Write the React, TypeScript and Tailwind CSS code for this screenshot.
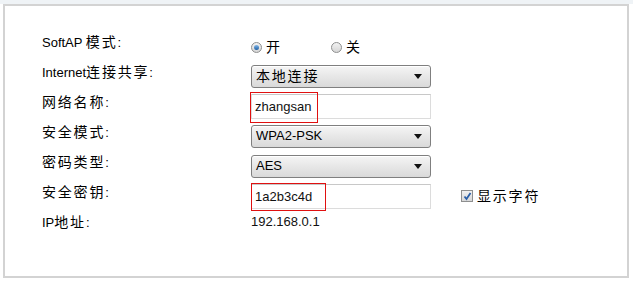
const latin = "font-['Liberation_Sans','Noto_Sans_CJK_SC',sans-serif]"

function Zh({ children }: { children: string }) {
  return <span className="text-[14px] tracking-[1.8px]">{children}</span>
}

function Label({ children, shift = "pb-[7px]" }: { children: React.ReactNode; shift?: string }) {
  return <div className={`w-[209px] shrink-0 text-[13px] text-black ${shift}`}>{children}</div>
}

function Radio({ checked }: { checked?: boolean }) {
  return (
    <span className="flex h-[11px] w-[11px] items-center justify-center rounded-full border border-[#8e8f8f] bg-gradient-to-b from-[#f2f2f2] to-[#d6d6d6]">
      {checked && (
        <span className="h-[5px] w-[5px] rounded-full bg-gradient-to-b from-[#7fb6e8] to-[#1d5fa3]" />
      )}
    </span>
  )
}

function Select({ value }: { value: React.ReactNode }) {
  return (
    <div className="flex h-[23px] w-[180px] items-center justify-between rounded-[3px] border border-[#7f7f7f] bg-gradient-to-b from-[#f5f5f5] to-[#d9d9d9] pl-[4px] pr-[8px] text-[13px] text-black shadow-[inset_0_1px_0_#ffffff]">
      <span>{value}</span>
      <svg width="8" height="5" viewBox="0 0 8 5">
        <path d="M0 0h8L4 5z" fill="#111" />
      </svg>
    </div>
  )
}

function TextInput({ value, box }: { value: string; box: string }) {
  return (
    <div className="relative h-[25px] w-[180px] border border-[#dcdcdc] border-t-[#c8c8c8] bg-white pl-[3px] text-[13px] leading-[23px] text-[#111]">
      {value}
      <div className={`absolute border border-[#e01010] ${box}`} />
    </div>
  )
}

export default function App() {
  return (
    <div className={`h-[283px] w-[633px] bg-white ${latin}`}>
      <div className="h-[4px] bg-[#eff3f6]" />
      <div className="ml-[3px] flex h-[274px] w-[626px] flex-col border-2 border-[#d3d3d3] pl-[37px] pt-[27px]">
        <div className="flex h-[28px] items-center">
          <Label shift="pb-[9px]">
            SoftAP <Zh>模式</Zh>:
          </Label>
          <div className="flex items-center">
            <div className="flex w-[80px] items-center gap-[4px]">
              <Radio checked />
              <Zh>开</Zh>
            </div>
            <div className="flex items-center gap-[4px]">
              <Radio />
              <Zh>关</Zh>
            </div>
          </div>
        </div>

        <div className="flex h-[30px] items-center">
          <Label>
            Internet<Zh>连接共享</Zh>:
          </Label>
          <Select value={<Zh>本地连接</Zh>} />
        </div>

        <div className="flex h-[30px] items-center">
          <Label>
            <Zh>网络名称</Zh>:
          </Label>
          <TextInput value="zhangsan" box="-left-[2px] -top-[3px] h-[31px] w-[68px]" />
        </div>

        <div className="flex h-[30px] items-center">
          <Label>
            <Zh>安全模式</Zh>:
          </Label>
          <Select value="WPA2-PSK" />
        </div>

        <div className="flex h-[30px] items-center">
          <Label>
            <Zh>密码类型</Zh>:
          </Label>
          <Select value="AES" />
        </div>

        <div className="flex h-[30px] items-center">
          <Label>
            <Zh>安全密钥</Zh>:
          </Label>
          <TextInput value="1a2b3c4d" box="-left-[1px] -top-[2px] h-[28px] w-[75px]" />
          <div className="ml-[30px] flex items-center gap-[4px] text-black">
            <span className="flex h-[12px] w-[12px] items-center justify-center border border-[#8e8f8f] bg-gradient-to-b from-[#f0f0f0] to-[#d8d8d8]">
              <svg width="9" height="9" viewBox="0 0 9 9">
                <path d="M1.5 4.5l2 2.5L7.5 1" fill="none" stroke="#2a5fa8" strokeWidth="1.8" />
              </svg>
            </span>
            <Zh>显示字符</Zh>
          </div>
        </div>

        <div className="flex h-[22px] items-center">
          <Label shift="">
            IP<Zh>地址</Zh>:
          </Label>
          <span className="text-[13px] text-[#111]">192.168.0.1</span>
        </div>
      </div>
    </div>
  )
}
